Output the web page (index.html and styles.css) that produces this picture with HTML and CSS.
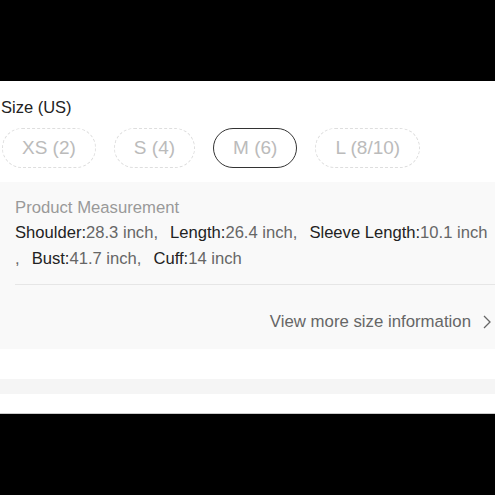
FILE: index.html
```html
<!DOCTYPE html>
<html>
<head>
<meta charset="utf-8">
<link rel="stylesheet" href="styles.css">
</head>
<body>
<div class="sheet">
  <div class="size-block">
    <div class="title">Size (US)</div>
    <div class="options">
      <div class="opt">XS (2)</div>
      <div class="opt">S (4)</div>
      <div class="opt selected">M (6)</div>
      <div class="opt">L (8/10)</div>
    </div>
  </div>
  <div class="panel">
    <div class="pm">Product Measurement</div>
    <div class="measures"><span class="item"><span class="k">Shoulder:</span>28.3 inch</span><span class="sep">,</span><span class="item"><span class="k">Length:</span>26.4 inch</span><span class="sep">,</span><span class="item"><span class="k">Sleeve Length:</span>10.1 inch</span><span class="sep">,</span><span class="item"><span class="k">Bust:</span>41.7 inch</span><span class="sep">,</span><span class="item"><span class="k">Cuff:</span>14 inch</span></div>
    <div class="divider"></div>
    <div class="more">
      <span>View more size information</span>
      <svg class="chev" width="10" height="16" viewBox="0 0 10 16"><polyline points="2,2 8,8 2,14" fill="none" stroke="#666" stroke-width="1.3"/></svg>
    </div>
  </div>
  <div class="spacer"></div>
  <div class="strip"></div>
  <div class="tail"></div>
</div>
</body>
</html>
```
FILE: styles.css
```css
html, body {
  margin: 0;
  padding: 0;
  background: #000;
}
body {
  font-family: "Liberation Sans", Arial, sans-serif;
  padding-top: 81px;
  height: 495px;
  box-sizing: border-box;
}
.sheet {
  background: #fff;
}
.size-block {
  padding: 16px 0 0 2px;
}
.title {
  font-size: 16.5px;
  line-height: 20px;
  color: #222;
  margin-bottom: 11px;
  margin-left: -1px;
}
.options {
  display: flex;
  gap: 18px;
}
.opt {
  box-sizing: border-box;
  height: 40px;
  padding: 0 19px;
  border: 1px dashed #dedede;
  border-radius: 20px;
  font-size: 19px;
  line-height: 38px;
  color: #bbb;
  white-space: nowrap;
}
.opt.selected {
  border: 1.5px solid #333;
  line-height: 37px;
}
.panel {
  margin-top: 14px;
  background: #f9f9f9;
  padding: 13px 0 14px 15px;
}
.pm {
  font-size: 16.7px;
  line-height: 25px;
  color: #999;
}
.measures {
  font-size: 16.6px;
  line-height: 25.5px;
  color: #666;
}
.item {
  display: inline-block;
  white-space: nowrap;
}
.k {
  color: #222;
}
.sep {
  display: inline-block;
  padding-right: 12px;
}
.divider {
  margin-top: 13px;
  height: 1px;
  background: #e6e6e6;
}
.more {
  margin-top: 24px;
  display: flex;
  justify-content: flex-end;
  align-items: center;
  gap: 11px;
  padding-right: 3px;
  font-size: 16.8px;
  line-height: 26px;
  color: #666;
}
.chev {
  display: block;
}
.spacer {
  height: 30px;
}
.strip {
  height: 15px;
  background: #f5f5f5;
}
.tail {
  height: 19px;
  border-bottom: 1px solid #ccc;
}
```
